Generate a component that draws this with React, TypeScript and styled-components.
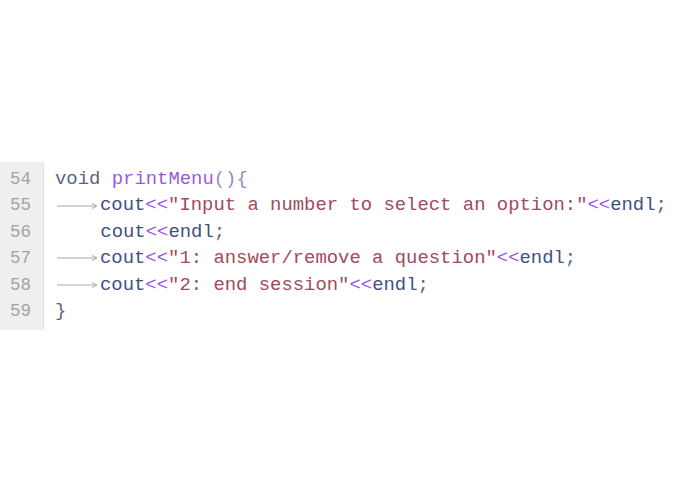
import React from "react";
import styled, { createGlobalStyle } from "styled-components";

const Global = createGlobalStyle`
  html, body { margin: 0; padding: 0; background: #ffffff; }
  body { width: 695px; height: 494px; overflow: hidden; }
`;

const Editor = styled.div`
  margin-top: 162px;
  display: flex;
  width: 695px;
  height: 168px;
  overflow: hidden;
  background: #ffffff;
`;

const Gutter = styled.div`
  width: 44px;
  flex: none;
  background: #efefef;
  border-right: 1px solid #e3e3e3;
  box-sizing: border-box;
  padding: 4px 12px 0 0;
  display: flex;
  flex-direction: column;
  align-items: flex-end;
`;

const LineNo = styled.div`
  height: 26.4px;
  line-height: 26.4px;
  font-family: "Liberation Mono", "DejaVu Sans Mono", monospace;
  font-size: 17.5px;
  color: #a3a3a3;
`;

const Code = styled.div`
  flex: 1;
  padding: 4px 0 0 11px;
  display: flex;
  flex-direction: column;
`;

const Line = styled.div`
  height: 26.4px;
  line-height: 26.4px;
  white-space: pre;
  font-family: "Liberation Mono", "DejaVu Sans Mono", monospace;
  font-size: 18.9px;
  color: #5b6581;
  display: flex;
  align-items: center;
`;

const Tok = styled.span<{ $c: string }>`
  color: ${(p) => p.$c};
`;

const TabArrow = styled.span`
  display: inline-flex;
  align-items: center;
  width: 45px;
  height: 100%;
  flex: none;
`;

const C = {
  kw: "#5c6682",
  fn: "#9a5ae0",
  punc: "#9a88c8",
  id: "#3f5183",
  op: "#9b4ff0",
  str: "#a24a5c",
  plain: "#5d6580",
};

const Tab = () => (
  <TabArrow>
    <svg width="45" height="10" viewBox="0 0 45 10">
      <line x1="2" y1="5" x2="41" y2="5" stroke="#a8a8a8" strokeWidth="1" />
      <path d="M37 2.5 L42 5 L37 7.5" fill="none" stroke="#a8a8a8" strokeWidth="1" />
    </svg>
  </TabArrow>
);

const Cout = ({ str }: { str?: string }) => (
  <>
    <Tok $c={C.id}>cout</Tok>
    <Tok $c={C.op}>&lt;&lt;</Tok>
    {str !== undefined && (
      <>
        <Tok $c={C.str}>{`"${str}"`}</Tok>
        <Tok $c={C.op}>&lt;&lt;</Tok>
      </>
    )}
    <Tok $c={C.id}>endl</Tok>
    <Tok $c={C.plain}>;</Tok>
  </>
);

export default function App() {
  return (
    <>
      <Global />
      <Editor>
        <Gutter>
          {[54, 55, 56, 57, 58, 59].map((n) => (
            <LineNo key={n}>{n}</LineNo>
          ))}
        </Gutter>
        <Code>
          <Line>
            <Tok $c={C.kw}>void</Tok>
            <Tok $c={C.plain}> </Tok>
            <Tok $c={C.fn}>printMenu</Tok>
            <Tok $c={C.punc}>(){"{"}</Tok>
          </Line>
          <Line>
            <Tab />
            <Cout str="Input a number to select an option:" />
          </Line>
          <Line>
            <Tok $c={C.plain}>{"    "}</Tok>
            <Cout />
          </Line>
          <Line>
            <Tab />
            <Cout str="1: answer/remove a question" />
          </Line>
          <Line>
            <Tab />
            <Cout str="2: end session" />
          </Line>
          <Line>
            <Tok $c={C.plain}>{"}"}</Tok>
          </Line>
        </Code>
      </Editor>
    </>
  );
}
